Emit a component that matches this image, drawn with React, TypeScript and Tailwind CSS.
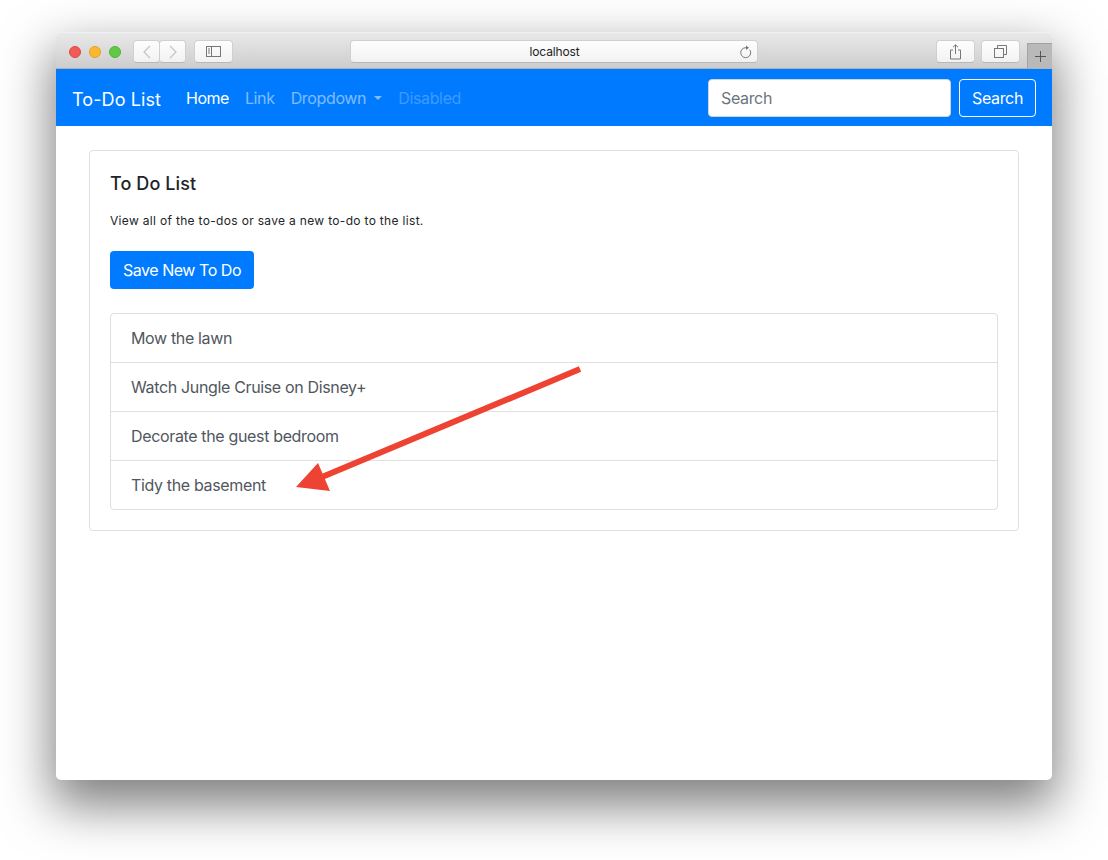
import React from "react";

const font = { fontFamily: "Inter, 'Noto Sans', sans-serif" };

function ToolButton({ className, children }: { className: string; children: React.ReactNode }) {
  return (
    <div className={"flex h-[23px] items-center justify-center rounded-[4px] border border-[#d0d0d0] border-b-[#b8b8b8] bg-gradient-to-b from-[#fefefe] to-[#f2f2f2] " + className}>
      {children}
    </div>
  );
}

export default function App() {
  const items = ["Mow the lawn", "Watch Jungle Cruise on Disney+", "Decorate the guest bedroom", "Tidy the basement"];
  return (
    <div className="relative h-[860px] w-[1108px] overflow-hidden bg-white pl-[56px] pt-[32px]" style={font}>
      <div className="relative flex h-[748px] w-[996px] flex-col overflow-hidden rounded-[5px] bg-white shadow-[0_22px_50px_4px_rgba(0,0,0,0.5)]">
        {/* title bar */}
        <div className="relative flex h-[37px] shrink-0 items-center border-b border-t border-b-[#b1b1b1] border-t-[#f0f0f0] bg-gradient-to-b from-[#e9e9e9] to-[#cdcdcd] pl-[13px] pr-[32px] pt-[2px]">
          <div className="flex gap-[8px]">
            <span className="h-[12px] w-[12px] rounded-full border border-[#e2463f] bg-[#f25a55]" />
            <span className="h-[12px] w-[12px] rounded-full border border-[#e1a325] bg-[#fbb82e]" />
            <span className="h-[12px] w-[12px] rounded-full border border-[#53b13b] bg-[#62c946]" />
          </div>
          <div className="ml-[12px] flex">
            <ToolButton className="w-[27px]">
              <svg width="10" height="14" viewBox="0 0 10 14" fill="none" stroke="#c4c4c4" strokeWidth="1.2"><path d="M8 1 2 7l6 6" /></svg>
            </ToolButton>
            <ToolButton className="-ml-px w-[27px]">
              <svg width="10" height="14" viewBox="0 0 10 14" fill="none" stroke="#c4c4c4" strokeWidth="1.2"><path d="m2 1 6 6-6 6" /></svg>
            </ToolButton>
          </div>
          <ToolButton className="ml-[8px] w-[39px]">
            <svg width="15" height="11" viewBox="0 0 15 11" fill="none" stroke="#777777"><rect x="0.5" y="0.5" width="14" height="10" /><path d="M5.5 0.5v10M2 3h2M2 5h2M2 7h2" /></svg>
          </ToolButton>
          <ToolButton className="ml-[117px] w-[408px] pl-[6px]">
            <span className="flex-1" />
            <span className="text-[12px] tracking-[-0.15px] text-[#222222]">localhost</span>
            <span className="flex flex-1 justify-end pr-[5px]">
              <svg width="13" height="14" viewBox="0 0 13 14" fill="none" stroke="#777777"><path d="M10.8 4.8A5 5 0 1 1 7 2.7" /><path d="M7 .5 10 2.8 7 5z" fill="#777777" stroke="none" /></svg>
            </span>
          </ToolButton>
          <ToolButton className="ml-[178px] w-[39px]">
            <svg width="13" height="16" viewBox="0 0 13 16" fill="none" stroke="#777777"><path d="M4 6H1.5v9h10V6H9M6.5 10V1M4 3.2 6.5 .8 9 3.2" /></svg>
          </ToolButton>
          <ToolButton className="ml-[6px] w-[39px]">
            <svg width="13" height="13" viewBox="0 0 13 13" fill="none" stroke="#777777"><rect x="0.5" y="3.5" width="9" height="9" /><path d="M3.5 3V.5h9v9H10" /></svg>
          </ToolButton>
          <div className="absolute bottom-0 right-0 flex h-[25px] w-[25px] items-center justify-center border-l border-t border-[#a3a3a3] bg-[#b9b9b9]">
            <svg width="13" height="13" viewBox="0 0 13 13" stroke="#555555"><path d="M6.5 1v11M1 6.5h11" /></svg>
          </div>
        </div>

        {/* navbar */}
        <nav className="flex h-[57px] shrink-0 items-center bg-[#007bff] pl-[16px] pr-[16px] text-[16px] tracking-[-0.35px]">
          <span className="pt-[3px] text-[18px] leading-[27px] tracking-[0.1px] text-white">To-Do List</span>
          <span className="ml-[25px] tracking-[-0.5px] text-white">Home</span>
          <span className="ml-[16px] text-white/50">Link</span>
          <span className="ml-[16px] flex items-center text-white/50">
            Dropdown
            <span className="ml-[8px] h-0 w-0 border-x-[4.8px] border-t-[4.8px] border-x-transparent border-t-white/50" />
          </span>
          <span className="ml-[16px] text-white/25">Disabled</span>
          <div className="ml-auto flex h-[38px] w-[243px] items-center rounded-[4px] border border-[#ced4da] bg-white px-[12px] text-[#6c757d]">Search</div>
          <div className="ml-[8px] flex h-[38px] w-[77px] items-center justify-center rounded-[4px] border border-white text-white">Search</div>
        </nav>

        {/* content */}
        <main className="px-[33px] pt-[24px]">
          <section className="h-[381px] w-[930px] rounded-[4px] border border-[#dfdfdf] p-[20px]">
            <h5 className="text-[18px] font-medium leading-[26px] tracking-[0.1px] text-[#212529]">To Do List</h5>
            <p className="mt-[15px] text-[12px] leading-[18px] tracking-[0.32px] text-[#212529]">View all of the to-dos or save a new to-do to the list.</p>
            <div className="mt-[21px] flex h-[38px] w-[144px] items-center justify-center rounded-[4px] bg-[#007bff] text-[16px] tracking-[-0.45px] text-white">Save New To Do</div>
            <ul className="mt-[24px] w-[888px] rounded-[4px] border border-[#dfdfdf]">
              {items.map((t, i) => (
                <li key={t} className={"flex items-center px-[20px] text-[16px] tracking-[-0.35px] text-[#50575e] " + (i > 0 ? "h-[49px] border-t border-[#dfdfdf]" : "h-[48px]")}>{t}</li>
              ))}
            </ul>
          </section>
        </main>
      </div>

      {/* annotation arrow */}
      <svg className="absolute left-0 top-0" width="1108" height="860" viewBox="0 0 1108 860">
        <path d="M580 369 322 477" fill="none" stroke="#ee4232" strokeWidth="6" />
        <path d="M296 487 318 463 330 491z" fill="#ee4232" />
      </svg>
    </div>
  );
}
